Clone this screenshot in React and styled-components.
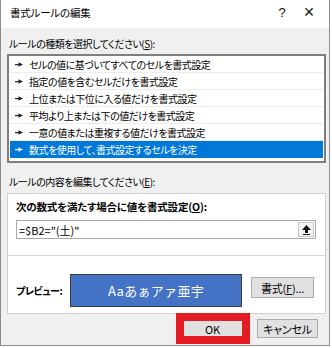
import styled, { createGlobalStyle } from "styled-components";

const GlobalStyle = createGlobalStyle`
  html, body {
    margin: 0;
    padding: 0;
    background: #ffffff;
  }
  body {
    width: 332px;
    height: 348px;
    overflow: hidden;
    font-family: "Noto Sans CJK JP", "Noto Sans", sans-serif;
    font-feature-settings: "palt";
    font-size: 10px;
    letter-spacing: -0.5px;
    color: #000000;
  }
`;

const Window = styled.div`
  box-sizing: border-box;
  width: 330px;
  height: 346px;
  border: 1px solid #8c8c8c;
  border-top: none;
  background: #f0f0f0;
  display: flex;
  flex-direction: column;
`;

const TitleBar = styled.div`
  height: 28px;
  background: #ffffff;
  display: flex;
  align-items: center;
  padding-left: 9px;
  box-sizing: border-box;

  .title {
    flex: 1;
    font-size: 10.5px;
    letter-spacing: -0.2px;
    margin-top: -4px;
  }
`;

const TitleBtn = styled.span`
  width: ${(p) => p.w}px;
  text-align: center;
  font-family: "Liberation Sans", sans-serif;
  font-size: ${(p) => p.size}px;
  letter-spacing: 0;
  margin-top: -4px;
  color: #111;
`;

const Body = styled.div`
  flex: 1;
  display: flex;
  flex-direction: column;
  padding: 0 3px 0 6px;
`;

const Label = styled.div`
  line-height: 16px;
  margin-top: ${(p) => p.top}px;
  padding-left: 2px;
  u {
    text-decoration: underline;
  }
`;

const ListBox = styled.div`
  margin-top: 2px;
  height: 109px;
  box-sizing: border-box;
  border: 2px solid #7f7f7f;
  background: #ffffff;
  padding: 0 1px;
`;

const Row = styled.div`
  height: 17px;
  box-sizing: border-box;
  display: flex;
  align-items: center;
  padding-left: 5px;
  gap: 6px;
  background: ${(p) => (p.selected ? "#0078d7" : "transparent")};
  color: ${(p) => (p.selected ? "#ffffff" : "#000000")};
  border-bottom: 1px solid ${(p) => (p.selected ? "#0078d7" : "#ececec")};
`;

const Arrow = ({ color }) => (
  <svg width="8" height="5" viewBox="0 0 8 5">
    <rect x="0" y="2" width="4" height="1.2" fill={color} />
    <path d="M3.5 0.3 L8 2.6 L3.5 4.8 Z" fill={color} />
  </svg>
);

const RuleBox = styled.div`
  margin-top: 3px;
  height: 121px;
  box-sizing: border-box;
  border: 1px solid #d0d0d0;
  background: #ffffff;
  display: flex;
  flex-direction: column;
`;

const UpperSection = styled.div`
  height: 62px;
  border-bottom: 1px solid #d4d4d4;
  padding: 6px 9px 0 8px;
  box-sizing: border-box;
`;

const Heading = styled.div`
  font-weight: bold;
  font-size: 10.5px;
  letter-spacing: -0.2px;
  line-height: 14px;
  u {
    text-decoration: underline;
  }
`;

const FormulaInput = styled.div`
  margin-top: 6px;
  height: 19px;
  box-sizing: border-box;
  border: 1px solid #a9a9a9;
  display: flex;
  align-items: center;
  justify-content: space-between;
  padding: 0 1px 0 2px;
  font-size: 11px;
  letter-spacing: 0;
`;

const CollapseBtn = styled.div`
  width: 16px;
  height: 15px;
  box-sizing: border-box;
  border: 1px solid #c6c6c6;
  background: #f3f3f3;
  display: flex;
  align-items: center;
  justify-content: center;
`;

const LowerSection = styled.div`
  flex: 1;
  display: flex;
  align-items: center;
  padding: 0 10px 0 8px;
`;

const PreviewLabel = styled.div`
  font-weight: bold;
  width: 54px;
  white-space: nowrap;
  margin-top: 12px;
`;

const PreviewBox = styled.div`
  width: 172px;
  height: 33px;
  box-sizing: border-box;
  border: 1px solid #3c3c3c;
  background: #4472c4;
  color: #ffffff;
  display: flex;
  align-items: center;
  justify-content: center;
  font-size: 13px;
  letter-spacing: 0.3px;
  font-feature-settings: normal;
  margin-top: 12px;
`;

const Button = styled.button`
  box-sizing: border-box;
  width: ${(p) => p.w}px;
  height: ${(p) => p.h}px;
  border: 1px solid #adadad;
  background: #e1e1e1;
  font-family: "Noto Sans CJK JP", "Noto Sans", sans-serif;
  font-feature-settings: "palt";
  font-size: 11px;
  letter-spacing: -0.2px;
  color: #000;
  padding: 0;
  margin-left: ${(p) => p.ml || 0}px;
  margin-top: ${(p) => p.mt || 0}px;
  u {
    text-decoration: underline;
  }
`;

const Footer = styled.div`
  display: flex;
  justify-content: flex-end;
  padding: 5px 8px 0 0;
`;

const Highlight = styled.div`
  position: relative;
  &::after {
    content: "";
    position: absolute;
    inset: -6px -7px -6px -6px;
    border: 8px solid #e31b23;
    pointer-events: none;
  }
`;

const rules = [
  "セルの値に基づいてすべてのセルを書式設定",
  "指定の値を含むセルだけを書式設定",
  "上位または下位に入る値だけを書式設定",
  "平均より上または下の値だけを書式設定",
  "一意の値または重複する値だけを書式設定",
  "数式を使用して、書式設定するセルを決定",
];

export default function App() {
  return (
    <>
      <GlobalStyle />
      <Window>
        <TitleBar>
          <span className="title">書式ルールの編集</span>
          <TitleBtn w={14} size={13}>?</TitleBtn>
          <TitleBtn w={40} size={18}>×</TitleBtn>
        </TitleBar>
        <Body>
          <Label top={8}>
            ルールの種類を選択してください(<u>S</u>):
          </Label>
          <ListBox>
            {rules.map((r, i) => (
              <Row key={r} selected={i === rules.length - 1}>
                <Arrow color={i === rules.length - 1 ? "#ffffff" : "#222222"} />
                <span>{r}</span>
              </Row>
            ))}
          </ListBox>
          <Label top={11}>
            ルールの内容を編集してください(<u>E</u>):
          </Label>
          <RuleBox>
            <UpperSection>
              <Heading>
                次の数式を満たす場合に値を書式設定(<u>O</u>):
              </Heading>
              <FormulaInput>
                <span>=$B2="(土)"</span>
                <CollapseBtn>
                  <svg width="9" height="10" viewBox="0 0 9 10">
                    <path d="M4.5 0 L9 5 L6 5 L6 8 L3 8 L3 5 L0 5 Z" fill="#111" />
                    <rect x="1" y="9" width="7" height="1" fill="#111" />
                  </svg>
                </CollapseBtn>
              </FormulaInput>
            </UpperSection>
            <LowerSection>
              <PreviewLabel>プレビュー:</PreviewLabel>
              <PreviewBox>Aaあぁアァ亜宇</PreviewBox>
              <Button w={63} h={21} ml={9} mt={6}>
                書式(<u>F</u>)...
              </Button>
            </LowerSection>
          </RuleBox>
          <Footer>
            <Highlight>
              <Button w={61} h={19}>OK</Button>
            </Highlight>
            <Button w={61} h={19} ml={14}>
              キャンセル
            </Button>
          </Footer>
        </Body>
      </Window>
    </>
  );
}
